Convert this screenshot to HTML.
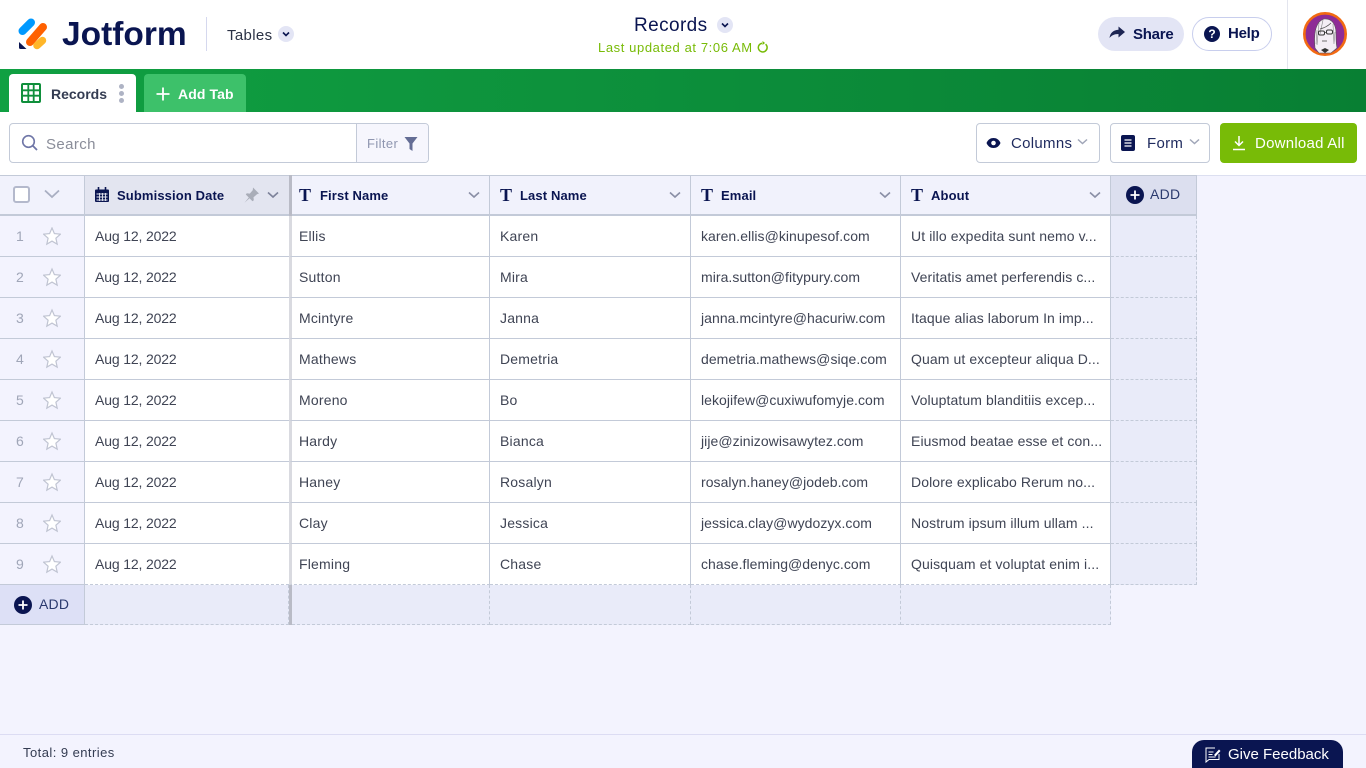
<!DOCTYPE html>
<html><head><meta charset="utf-8"><title>Records</title>
<style>
*{box-sizing:border-box}
html,body{margin:0;padding:0}
body{width:1366px;height:768px;overflow:hidden;background:#f3f3fe;font-family:"Liberation Sans",sans-serif;position:relative;color:#0a1551}
.a{position:absolute;white-space:nowrap}
svg{position:absolute;display:block}
.r{position:absolute;left:0;width:1197px;height:41px}
.r>div{position:absolute;top:0;height:41px;line-height:40px;font-size:14px;color:#3f4454;border-bottom:1px solid #c3cad8;border-right:1px solid #c3cad8;background:#fff;white-space:nowrap;overflow:hidden;letter-spacing:.2px}
.r>.n{left:0;width:85px;background:#f3f3fe;color:#a0a6b8;padding-left:16px;letter-spacing:0}
.r>.d{left:85px;width:204px;padding-left:10px;border-right:0;letter-spacing:-.15px}
.r>.f{left:289px;width:201px;border-left:3px solid #d9dae0;padding-left:7px}
.r>.l{left:490px;width:201px;padding-left:10px}
.r>.e{left:691px;width:210px;padding-left:10px;letter-spacing:.05px}
.r>.b{left:901px;width:210px;padding-left:10px;letter-spacing:.1px}
.r>.x{left:1111px;width:86px;background:#e9ebf9;border-right:1px dashed #c3cad8;border-bottom:1px dashed #c3cad8}
.last>.d,.last>.f,.last>.l,.last>.e,.last>.b{border-bottom-style:dashed}
.h{position:absolute;top:175px;height:41px;background:#f1f2fc;border-top:1px solid #c3cad8;border-bottom:2px solid #c3cad8;border-right:1px solid #c3cad8}
.ht{position:absolute;top:187px;font-size:13px;font-weight:bold;color:#0a1551;line-height:18px;letter-spacing:.12px;white-space:nowrap}
.t{position:absolute;top:185px;font:bold 18px/21px "Liberation Serif",serif;color:#0a1551}
.ad{position:absolute;top:585px;height:40px;background:#e9ebf9;border-right:1px dashed #c3cad8;border-bottom:1px dashed #c3cad8}
.btn{position:absolute;top:123px;height:40px;background:#fff;border:1px solid #c3cad8;border-radius:4px}
</style></head><body>

<!-- Header -->
<div class="a" style="left:0;top:0;width:1366px;height:69px;background:#fff"></div>
<svg style="left:17px;top:18px" width="32" height="33" viewBox="0 0 32 33">
<path d="M5.500 13L14 4.500" stroke="#0099ff" stroke-width="8" stroke-linecap="round"/>
<path d="M13 24L26 9" stroke="#ff6100" stroke-width="8" stroke-linecap="round"/>
<path d="M20 27.500L25.500 22.500" stroke="#ffb629" stroke-width="7.500" stroke-linecap="round"/>
<path d="M2 24L9.500 31H3.500Q2 31 2 29.500Z" fill="#0a1551"/>
</svg>
<div class="a" style="left:62px;top:16px;font-size:33.500px;line-height:38px;font-weight:bold;color:#0a1551">Jotform</div>
<div class="a" style="left:206px;top:17px;width:1px;height:34px;background:#d5d8ee"></div>
<div class="a" style="left:227px;top:26px;font-size:15px;line-height:19px;color:#2b3245;letter-spacing:.35px">Tables</div>
<div class="a" style="left:278px;top:26px;width:16px;height:16px;border-radius:50%;background:#e3e5f5"></div>
<svg style="left:278px;top:26px" width="16" height="16"><path d="M5 6.500l3 3 3-3" fill="none" stroke="#0a1551" stroke-width="1.600"/></svg>

<div class="a" style="left:634px;top:14px;font-size:19px;line-height:23px;color:#0a1551;letter-spacing:.4px">Records</div>
<div class="a" style="left:717px;top:17px;width:16px;height:16px;border-radius:50%;background:#e3e5f5"></div>
<svg style="left:717px;top:17px" width="16" height="16"><path d="M5 6.500l3 3 3-3" fill="none" stroke="#0a1551" stroke-width="1.600"/></svg>
<div class="a" style="left:598px;top:39px;font-size:13px;line-height:17px;color:#78bb07;letter-spacing:.6px">Last updated at 7:06 AM</div>
<svg style="left:756px;top:41px" width="13" height="13" viewBox="0 0 13 13"><path d="M9.600 3.200A4.400 4.400 0 1 1 6 2.200" fill="none" stroke="#78bb07" stroke-width="1.500"/><path d="M6.500 0v4l2.600-2z" fill="#78bb07"/></svg>

<div class="a" style="left:1098px;top:17px;width:86px;height:34px;border-radius:17px;background:#e3e5f5"></div>
<svg style="left:1108px;top:25px" width="18" height="16" viewBox="0 0 18 16"><path d="M10.500 1.500L17 7l-6.500 5.500V9C6 9 3.500 10.500 1.500 13 2 8.500 5 5 10.500 4.800z" fill="#1d2553"/></svg>
<div class="a" style="left:1133px;top:26px;font-size:15px;line-height:18px;font-weight:bold;color:#0a1551;letter-spacing:-.25px">Share</div>
<div class="a" style="left:1192px;top:17px;width:80px;height:34px;border-radius:17px;background:#fff;border:1px solid #c8ceed"></div>
<div class="a" style="left:1204px;top:26px;width:16px;height:16px;border-radius:50%;background:#0a1551;color:#fff;font-size:12px;font-weight:bold;line-height:16px;text-align:center">?</div>
<div class="a" style="left:1228px;top:25px;font-size:15px;line-height:18px;font-weight:bold;color:#0a1551;letter-spacing:-.25px">Help</div>
<div class="a" style="left:1287px;top:0;width:1px;height:69px;background:#e3e5ee"></div>
<svg style="left:1303px;top:12px" width="44" height="44" viewBox="0 0 44 44">
<circle cx="22" cy="22" r="20.700" fill="#8e2c96" stroke="#f26a12" stroke-width="2.600"/>
<path d="M12 36C11 26 11 10 21 7c8-1 12 6 12 14 0 6 0 11 1 15l-6 5H16z" fill="#f4eef5" stroke="#555" stroke-width=".6"/>
<path d="M16 11l-2 22M20 8l-3 14M30 12l1 20M14 18l-1 14M32 20l-1 11" stroke="#888" stroke-width=".6" fill="none"/>
<path d="M17 17c4-1 8-3 11-6" stroke="#555" fill="none" stroke-width=".8"/>
<rect x="15.500" y="19" width="6" height="4" rx="1.500" fill="none" stroke="#333" stroke-width="1"/>
<rect x="23.500" y="18" width="6" height="4" rx="1.500" fill="none" stroke="#333" stroke-width="1"/>
<path d="M21.500 20.500h2M19 29h5" stroke="#444" stroke-width=".8" fill="none"/>
<path d="M18 38l4-2 4 2-4 3z" fill="#333"/>
</svg>

<!-- Green bar -->
<div class="a" style="left:0;top:69px;width:1366px;height:43px;background:linear-gradient(90deg,#10a042 0,#0c8d3a 55%,#087f33 100%)"></div>
<div class="a" style="left:9px;top:74px;width:127px;height:38px;background:#fff;border-radius:4px 4px 0 0"></div>
<svg style="left:21px;top:83px" width="20" height="20" viewBox="0 0 20 20"><rect x="1" y="1" width="18" height="18" rx="1" fill="#fff" stroke="#0f8f3b" stroke-width="2"/><path d="M1 7.300h18M1 12.700h18M7.300 1v18M12.700 1v18" stroke="#0f8f3b" stroke-width="1.800"/></svg>
<div class="a" style="left:51px;top:85px;font-size:14px;line-height:18px;font-weight:bold;color:#343c52">Records</div>
<div class="a" style="left:119px;top:84px;width:5px;height:5px;border-radius:50%;background:#aeb3c4"></div>
<div class="a" style="left:119px;top:91px;width:5px;height:5px;border-radius:50%;background:#aeb3c4"></div>
<div class="a" style="left:119px;top:98px;width:5px;height:5px;border-radius:50%;background:#aeb3c4"></div>
<div class="a" style="left:144px;top:74px;width:102px;height:38px;background:#3dc16a;border-radius:4px 4px 0 0"></div>
<svg style="left:156px;top:87px" width="14" height="14"><path d="M7 .5v13M.5 7h13" stroke="#fff" stroke-width="1.800"/></svg>
<div class="a" style="left:178px;top:85px;font-size:14px;line-height:18px;font-weight:bold;color:#fff;letter-spacing:.1px">Add Tab</div>

<!-- Toolbar -->
<div class="a" style="left:0;top:112px;width:1366px;height:63px;background:#fff"></div>
<div class="a" style="left:0;top:175px;width:1366px;height:1px;background:#dcdff0"></div>
<div class="btn" style="left:9px;width:420px"></div>
<div class="a" style="left:356px;top:124px;width:72px;height:38px;background:#f6f6fd;border-left:1px solid #c3cad8;border-radius:0 3px 3px 0"></div>
<svg style="left:21px;top:134px" width="18" height="18" viewBox="0 0 18 18"><circle cx="7.500" cy="7.500" r="5.800" fill="none" stroke="#6f76a7" stroke-width="1.600"/><path d="M11.800 11.800L16 16" stroke="#6f76a7" stroke-width="1.800"/></svg>
<div class="a" style="left:46px;top:135px;font-size:15px;line-height:19px;color:#8a8d99;letter-spacing:.4px">Search</div>
<div class="a" style="left:367px;top:135px;font-size:13px;line-height:17px;color:#8f96b0;letter-spacing:.4px">Filter</div>
<svg style="left:404px;top:137px" width="14" height="14" viewBox="0 0 14 14"><path d="M.5 0h13L8.500 6.500V14l-3-2V6.500z" fill="#646d95"/></svg>

<div class="btn" style="left:976px;width:124px"></div>
<svg style="left:986px;top:137px" width="15" height="12" viewBox="0 0 15 12"><path d="M.5 6C2 2.500 4.500 1 7.500 1s5.500 1.500 7 5c-1.500 3.500-4 5-7 5s-5.500-1.500-7-5z" fill="#0a1551"/><circle cx="7.500" cy="6" r="2.300" fill="#fff"/></svg>
<div class="a" style="left:1011px;top:135px;font-size:15px;line-height:18px;color:#1e2a5e;letter-spacing:.3px">Columns</div>
<svg style="left:1077px;top:138px" width="11" height="8"><path d="M1 1.500l4.500 4 4.500-4" fill="none" stroke="#a0a6b8" stroke-width="1.500"/></svg>
<div class="btn" style="left:1110px;width:100px"></div>
<div class="a" style="left:1121px;top:135px;width:14px;height:16px;background:#0a1551;border-radius:2px"></div>
<svg style="left:1121px;top:135px" width="14" height="16"><path d="M3.500 5h7M3.500 8h7M3.500 11h7" stroke="#fff" stroke-width="1.300"/></svg>
<div class="a" style="left:1147px;top:135px;font-size:15px;line-height:18px;color:#1e2a5e;letter-spacing:.3px">Form</div>
<svg style="left:1189px;top:138px" width="11" height="8"><path d="M1 1.500l4.500 4 4.500-4" fill="none" stroke="#a0a6b8" stroke-width="1.500"/></svg>
<div class="a" style="left:1220px;top:123px;width:137px;height:40px;background:#78bb07;border-radius:4px"></div>
<svg style="left:1232px;top:136px" width="14" height="15" viewBox="0 0 14 15"><path d="M7 0v9M3 5.500L7 9.500l4-4M1 13.500h12" fill="none" stroke="#fff" stroke-width="1.500"/></svg>
<div class="a" style="left:1255px;top:135px;font-size:15px;line-height:18px;color:#fff;letter-spacing:.25px">Download All</div>

<!-- Table header -->
<div class="h" style="left:0;width:85px"></div>
<div class="a" style="left:13px;top:186px;width:17px;height:17px;background:#fff;border:2px solid #b4b9cc;border-radius:3px"></div>
<svg style="left:44px;top:189px" width="16" height="10"><path d="M1 1.500l7 6.500 7-6.500" fill="none" stroke="#a9afc2" stroke-width="1.800"/></svg>
<div class="h" style="left:85px;width:205px;background:#e3e5f0;border-right:0"></div>
<svg style="left:95px;top:187px" width="14" height="15" viewBox="0 0 14 15"><path d="M1 2.500h12a1 1 0 0 1 1 1V14a1 1 0 0 1-1 1H1a1 1 0 0 1-1-1V3.500a1 1 0 0 1 1-1z" fill="#0a1551"/><path d="M3.500 0v3M10.500 0v3" stroke="#0a1551" stroke-width="1.600"/><path d="M1.500 7h11M1.500 10h11M1.500 13h11M4.500 6v8M7.500 6v8M10.500 6v8" stroke="#e3e5f0" stroke-width=".9"/></svg>
<div class="ht" style="left:117px">Submission Date</div>
<svg style="left:243px;top:187px" width="17" height="16" viewBox="0 0 17 16"><path d="M10 .5l6 6-2 .8-3.500 3 .3 3-1.300 1-3-3-5 4.500 4.300-5.300-3-3 1-1.200 3 .3 3-3.500z" fill="#a9adb8"/></svg>
<svg style="left:267px;top:191px" width="12" height="8"><path d="M1 1.500l5 4.500 5-4.500" fill="none" stroke="#7d829a" stroke-width="1.600"/></svg>
<div class="h" style="left:292px;width:198px"></div>
<div class="t" style="left:299px">T</div><div class="ht" style="left:320px">First Name</div>
<svg style="left:468px;top:191px" width="12" height="8"><path d="M1 1.500l5 4.500 5-4.500" fill="none" stroke="#8a8fa6" stroke-width="1.600"/></svg>
<div class="h" style="left:490px;width:201px"></div>
<div class="t" style="left:500px">T</div><div class="ht" style="left:520px">Last Name</div>
<svg style="left:669px;top:191px" width="12" height="8"><path d="M1 1.500l5 4.500 5-4.500" fill="none" stroke="#8a8fa6" stroke-width="1.600"/></svg>
<div class="h" style="left:691px;width:210px"></div>
<div class="t" style="left:701px">T</div><div class="ht" style="left:721px">Email</div>
<svg style="left:879px;top:191px" width="12" height="8"><path d="M1 1.500l5 4.500 5-4.500" fill="none" stroke="#8a8fa6" stroke-width="1.600"/></svg>
<div class="h" style="left:901px;width:210px"></div>
<div class="t" style="left:911px">T</div><div class="ht" style="left:931px">About</div>
<svg style="left:1089px;top:191px" width="12" height="8"><path d="M1 1.500l5 4.500 5-4.500" fill="none" stroke="#8a8fa6" stroke-width="1.600"/></svg>
<div class="h" style="left:1111px;width:86px;background:#dcdfef"></div>
<svg style="left:1126px;top:186px" width="18" height="18"><circle cx="9" cy="9" r="9" fill="#0a1551"/><path d="M9 4.500v9M4.500 9h9" stroke="#fff" stroke-width="1.800"/></svg>
<div class="a" style="left:1150px;top:186px;font-size:14px;line-height:17px;color:#2b3a6e;letter-spacing:.3px">ADD</div>

<!-- Rows -->
<div class="r" style="top:216px"><div class="n">1</div><div class="d">Aug 12, 2022</div><div class="f">Ellis</div><div class="l">Karen</div><div class="e">karen.ellis@kinupesof.com</div><div class="b">Ut illo expedita sunt nemo v...</div><div class="x"></div></div>
<div class="r" style="top:257px"><div class="n">2</div><div class="d">Aug 12, 2022</div><div class="f">Sutton</div><div class="l">Mira</div><div class="e">mira.sutton@fitypury.com</div><div class="b">Veritatis amet perferendis c...</div><div class="x"></div></div>
<div class="r" style="top:298px"><div class="n">3</div><div class="d">Aug 12, 2022</div><div class="f">Mcintyre</div><div class="l">Janna</div><div class="e">janna.mcintyre@hacuriw.com</div><div class="b">Itaque alias laborum In imp...</div><div class="x"></div></div>
<div class="r" style="top:339px"><div class="n">4</div><div class="d">Aug 12, 2022</div><div class="f">Mathews</div><div class="l">Demetria</div><div class="e">demetria.mathews@siqe.com</div><div class="b">Quam ut excepteur aliqua D...</div><div class="x"></div></div>
<div class="r" style="top:380px"><div class="n">5</div><div class="d">Aug 12, 2022</div><div class="f">Moreno</div><div class="l">Bo</div><div class="e">lekojifew@cuxiwufomyje.com</div><div class="b">Voluptatum blanditiis excep...</div><div class="x"></div></div>
<div class="r" style="top:421px"><div class="n">6</div><div class="d">Aug 12, 2022</div><div class="f">Hardy</div><div class="l">Bianca</div><div class="e">jije@zinizowisawytez.com</div><div class="b">Eiusmod beatae esse et con...</div><div class="x"></div></div>
<div class="r" style="top:462px"><div class="n">7</div><div class="d">Aug 12, 2022</div><div class="f">Haney</div><div class="l">Rosalyn</div><div class="e">rosalyn.haney@jodeb.com</div><div class="b">Dolore explicabo Rerum no...</div><div class="x"></div></div>
<div class="r" style="top:503px"><div class="n">8</div><div class="d">Aug 12, 2022</div><div class="f">Clay</div><div class="l">Jessica</div><div class="e">jessica.clay@wydozyx.com</div><div class="b">Nostrum ipsum illum ullam ...</div><div class="x"></div></div>
<div class="r last" style="top:544px"><div class="n">9</div><div class="d">Aug 12, 2022</div><div class="f">Fleming</div><div class="l">Chase</div><div class="e">chase.fleming@denyc.com</div><div class="b">Quisquam et voluptat enim i...</div><div class="x"></div></div>

<!-- Stars -->
<svg style="left:43px;top:227px" width="18" height="387" viewBox="0 0 18 387" fill="#fff" stroke="#c0c4d2" stroke-width="1.200">
<defs><path id="s" d="M9 1l2.400 5.600 6 .6-4.500 4 1.300 6L9 14.100 3.800 17.200l1.300-6-4.500-4 6-.6z"/></defs>
<use href="#s"/><use href="#s" y="41"/><use href="#s" y="82"/><use href="#s" y="123"/><use href="#s" y="164"/><use href="#s" y="205"/><use href="#s" y="246"/><use href="#s" y="287"/><use href="#s" y="328"/>
</svg>

<!-- Add row -->
<div class="ad" style="left:0;width:85px;background:#dde0f6;border-right:1px solid #c3cad8;border-bottom:1px solid #c3cad8"></div>
<svg style="left:14px;top:596px" width="18" height="18"><circle cx="9" cy="9" r="9" fill="#0a1551"/><path d="M9 4.500v9M4.500 9h9" stroke="#fff" stroke-width="1.800"/></svg>
<div class="a" style="left:39px;top:596px;font-size:14px;line-height:17px;color:#2b3a6e;letter-spacing:.2px">ADD</div>
<div class="ad" style="left:85px;width:204px"></div>
<div class="ad" style="left:292px;width:198px"></div>
<div class="ad" style="left:490px;width:201px"></div>
<div class="ad" style="left:691px;width:210px"></div>
<div class="ad" style="left:901px;width:210px"></div>
<!-- Frozen column divider -->
<div class="a" style="left:289px;top:175px;width:3px;height:41px;background:#b9bbc6"></div>
<div class="a" style="left:289px;top:585px;width:3px;height:40px;background:#b9bbc6"></div>

<!-- Footer -->
<div class="a" style="left:0;top:734px;width:1366px;height:1px;background:#dcdcf3"></div>
<div class="a" style="left:23px;top:744px;font-size:13px;line-height:17px;color:#343c52;letter-spacing:.45px">Total: 9 entries</div>
<div class="a" style="left:1192px;top:740px;width:151px;height:28px;background:#0a1551;border-radius:12px 12px 0 0"></div>
<svg style="left:1205px;top:747px" width="16" height="16" viewBox="0 0 16 16"><path d="M10 1H1v14l3-2.500h10V7" fill="none" stroke="#fff" stroke-width="1"/><path d="M3.500 5h5M3.500 7.500h4M3.500 10h7" stroke="#fff" stroke-width="1"/><path d="M9 8l5-5.500 1.500 1.500-5 5.500z" fill="#fff"/></svg>
<div class="a" style="left:1228px;top:746px;font-size:15px;line-height:18px;color:#fff">Give Feedback</div>
</body></html>
